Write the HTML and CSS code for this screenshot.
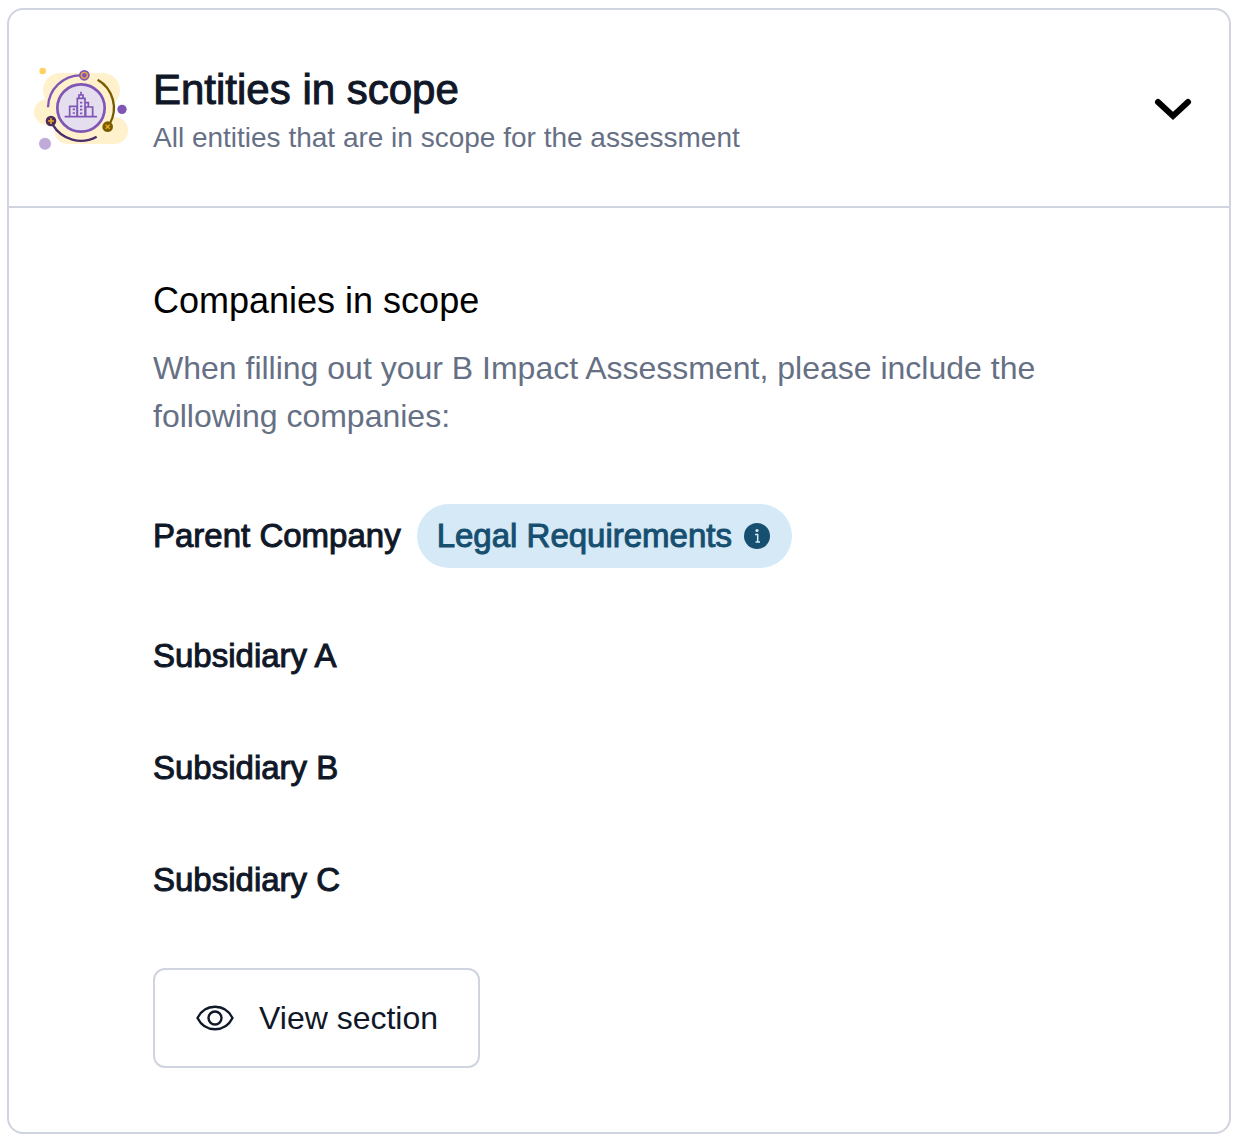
FILE: index.html
```html
<!DOCTYPE html>
<html lang="en">
<head>
<meta charset="utf-8">
<meta name="viewport" content="width=device-width, initial-scale=1">
<title>Entities in scope</title>
<link rel="stylesheet" href="styles.css">
</head>
<body>
<main class="card">
  <header class="card-header">
    <svg class="illustration" viewBox="27 12 288 288" aria-hidden="true">
      <g fill="#fff1cc">
        <rect x="57" y="51" width="231" height="104" rx="52"/>
        <rect x="30" y="129" width="240" height="78" rx="39"/>
        <rect x="91" y="183" width="221" height="81" rx="40"/>
      </g>
      <circle cx="56" cy="45" r="10" fill="#ffd25f"/>
      <circle cx="294" cy="160" r="14" fill="#7f56b5"/>
      <circle cx="63" cy="263" r="18" fill="#bfaada"/>
      <g fill="none" stroke-width="7">
        <path d="M72 154A98 98 0 0 1 172 58" stroke="#7f56b5"/>
        <path d="M221 71A98 98 0 0 1 257 204" stroke="#7a5c00"/>
        <path d="M86 206A98 98 0 0 0 218 242" stroke="#4b2e6b"/>
        <circle cx="171" cy="156" r="71" fill="#e5deef" stroke="#7f56b5" stroke-width="8"/>
      </g>
      <circle cx="181" cy="58" r="16" fill="#7f56b5"/>
      <circle cx="181" cy="58" r="9" fill="none" stroke="#f0a840" stroke-width="4"/>
      <circle cx="81" cy="195" r="16" fill="#4b2e5b"/>
      <path d="M72 195h18M81 186v18" stroke="#e8a52c" stroke-width="5"/>
      <circle cx="251" cy="212" r="16" fill="#7a5c00"/>
      <path d="M245 206l12 12M257 206l-12 12" stroke="#e8ad20" stroke-width="4"/>
      <g fill="none" stroke="#7f56b5" stroke-width="5">
        <path d="M122 182h97M137 181v-30h22v30M160 181v-54h23v54M183 140h10v12M185 181v-28h21v28M165 126v-9h12v9M171 116v-9"/>
        <path d="M146 160h7M146 171h7M168 140h7M168 151h7M168 161h7M168 172h7"/>
      </g>
    </svg>
    <div class="heading">
      <h1 class="title">Entities in scope</h1>
      <p class="subtitle">All entities that are in scope for the assessment</p>
    </div>
    <button class="toggle" type="button" aria-label="Collapse section" aria-expanded="true">
      <svg viewBox="0 0 40 40" width="40" height="40" aria-hidden="true"><path d="M5 14L20 28L35 14" fill="none" stroke="#000" stroke-width="6" stroke-linecap="round" stroke-linejoin="miter"/></svg>
    </button>
  </header>
  <section class="card-body">
    <h2 class="section-title">Companies in scope</h2>
    <p class="description">When filling out your B Impact Assessment, please include the following companies:</p>
    <ul class="companies">
      <li class="company">Parent Company
        <span class="badge">Legal Requirements
          <svg viewBox="0 0 26 26" width="26" height="26" aria-hidden="true"><circle cx="13" cy="13" r="13" fill="#174f70"/><circle cx="13" cy="7.500" r="1.600" fill="#d6e9f6"/><path d="M11 11.500h2.700v7.500M11.500 19h4.500" fill="none" stroke="#d6e9f6" stroke-width="1.500"/></svg>
        </span>
      </li>
      <li class="company">Subsidiary A</li>
      <li class="company">Subsidiary B</li>
      <li class="company">Subsidiary C</li>
    </ul>
    <button class="view" type="button">
      <svg viewBox="0 0 40 40" width="40" height="40" aria-hidden="true"><g fill="none" stroke="#101828" stroke-width="2.4"><path d="M2.500 20C6 13 12.500 8.800 20 8.800S34 13 37.500 20C34 27 27.500 31.200 20 31.200S6 27 2.500 20Z" stroke-linejoin="round"/><circle cx="20" cy="20" r="6.500"/></g></svg>
      View section
    </button>
  </section>
</main>
</body>
</html>
```
FILE: styles.css
```css
* {
  box-sizing: border-box;
}

body {
  margin: 8px 3px 6px 7px;
  background: #fff;
  color: #101828;
  font-family: "Liberation Sans", Arial, sans-serif;
  font-size: 32px;
  line-height: 48px;
}

h1, h2, p, ul {
  margin: 0;
  padding: 0;
}

.card {
  border: 2px solid #d0d4df;
  border-radius: 16px;
}

.card-header {
  display: flex;
  align-items: center;
  gap: 24px;
  padding: 50px 36px 50px 24px;
  border-bottom: 2px solid #d0d4df;
}

.illustration {
  flex: none;
  width: 96px;
  height: 96px;
}

.heading {
  flex: 1;
}

.title {
  font-size: 42px;
  font-weight: 400;
  line-height: 60px;
  -webkit-text-stroke: 1px;
}

.subtitle {
  color: #667085;
  font-size: 28px;
  line-height: 36px;
}

.toggle {
  display: flex;
  padding: 0;
  border: 0;
  background: none;
}

.card-body {
  padding: 64px 144px;
}

.section-title {
  margin-bottom: 14px;
  color: #000;
  font-size: 36px;
  font-weight: 400;
  line-height: 58px;
}

.description {
  color: #667085;
}

.companies {
  display: grid;
  gap: 64px;
  margin: 64px 0;
  list-style: none;
  font-size: 33px;
}

.company {
  display: flex;
  align-items: center;
  gap: 16px;
  -webkit-text-stroke: 1px;
}

.badge {
  display: flex;
  align-items: center;
  gap: 12px;
  padding: 8px 22px 8px 20px;
  border-radius: 32px;
  background: #d6e9f6;
  color: #174f70;
}

.view {
  display: flex;
  align-items: center;
  gap: 24px;
  padding: 24px 40px;
  border: 2px solid #d0d4df;
  border-radius: 12px;
  background: #fff;
  color: #101828;
  font: inherit;
}
```
